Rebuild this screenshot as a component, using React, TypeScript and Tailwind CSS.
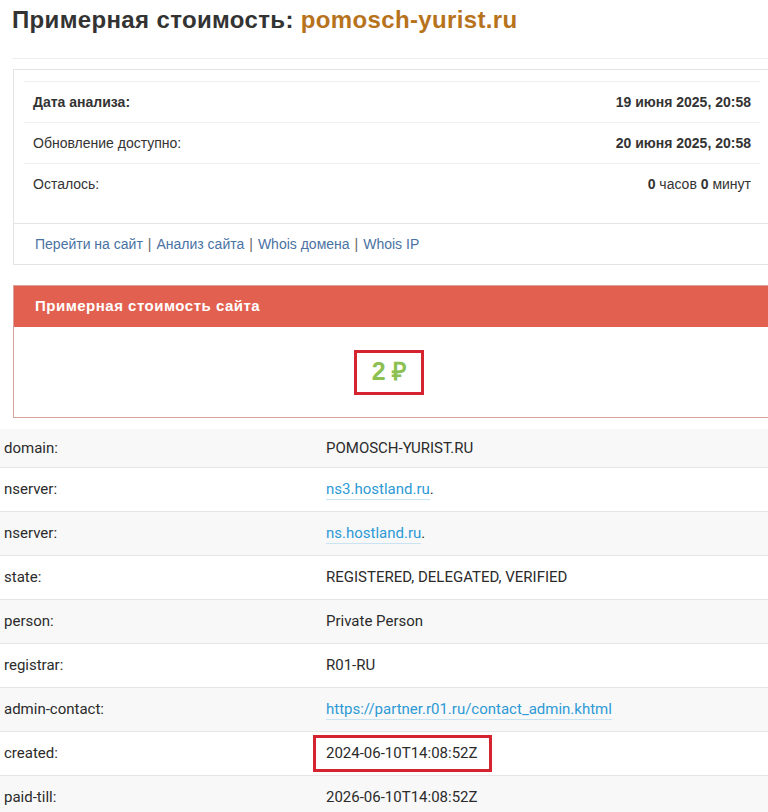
import React from "react";

const rows: { label: string; value: React.ReactNode; boxed?: boolean }[] = [
  { label: "domain:", value: "POMOSCH-YURIST.RU" },
  {
    label: "nserver:",
    value: (
      <>
        <a className="text-[#2d9ad6] border-b border-[#c9e3f3] pb-[1px]">ns3.hostland.ru</a>.
      </>
    ),
  },
  {
    label: "nserver:",
    value: (
      <>
        <a className="text-[#2d9ad6] border-b border-[#c9e3f3] pb-[1px]">ns.hostland.ru</a>.
      </>
    ),
  },
  { label: "state:", value: "REGISTERED, DELEGATED, VERIFIED" },
  { label: "person:", value: "Private Person" },
  { label: "registrar:", value: "R01-RU" },
  {
    label: "admin-contact:",
    value: (
      <a className="text-[#2d9ad6] border-b border-[#c9e3f3] pb-[1px]">
        https://partner.r01.ru/contact_admin.khtml
      </a>
    ),
  },
  { label: "created:", value: "2024-06-10T14:08:52Z", boxed: true },
  { label: "paid-till:", value: "2026-06-10T14:08:52Z" },
];

export default function App() {
  return (
    <div
      className="w-[768px] h-[812px] overflow-hidden bg-white text-[#333]"
      style={{ fontFamily: '"Liberation Sans", Arial, sans-serif' }}
    >
      <div className="w-[771px]">
        {/* Title */}
        <div className="pl-[12px] pt-[5px]">
          <h1 className="text-[24px] leading-[30px] font-bold tracking-[0.35px] text-[#333]">
            Примерная стоимость: <span className="text-[#b6731c]">pomosch-yurist.ru</span>
          </h1>
          <div className="mt-[23px] border-t border-[#eeeeee]" />
        </div>

        {/* Info card */}
        <div className="ml-[13px] mt-[10px] border border-[#e3e3e3] bg-white">
          <div className="px-[10px] pt-[11px]">
            <div className="border-t border-[#efefef] text-[14px]">
              <div className="h-[41px] flex items-center justify-between px-[9px] border-b border-[#efefef]">
                <span className="font-bold">Дата анализа:</span>
                <span className="font-bold">19 июня 2025, 20:58</span>
              </div>
              <div className="h-[41px] flex items-center justify-between px-[9px] border-b border-[#efefef]">
                <span>Обновление доступно:</span>
                <span className="font-bold">20 июня 2025, 20:58</span>
              </div>
              <div className="h-[41px] flex items-center justify-between px-[9px]">
                <span>Осталось:</span>
                <span>
                  <b>0</b> часов <b>0</b> минут
                </span>
              </div>
            </div>
          </div>
          <div className="mt-[18px] border-t border-[#e6e6e6] h-[41px] flex items-center px-[21px] text-[14px] text-[#666]">
            <a className="text-[#4a72a3]">Перейти на сайт</a>
            <span className="mx-[5px]">|</span>
            <a className="text-[#4a72a3]">Анализ сайта</a>
            <span className="mx-[5px]">|</span>
            <a className="text-[#4a72a3]">Whois домена</a>
            <span className="mx-[5px]">|</span>
            <a className="text-[#4a72a3]">Whois IP</a>
          </div>
        </div>

        {/* Price panel */}
        <div className="ml-[13px] mt-[20px] border border-[#d7a49c] bg-white">
          <div className="h-[41px] bg-[#e2604f] flex items-center px-[21px] text-white text-[15px] font-bold tracking-[0.5px]">
            Примерная стоимость сайта
          </div>
          <div className="h-[90px] flex items-center justify-center">
            <div className="w-[70px] h-[45px] border-[3px] border-[#d42430] flex items-center justify-center text-[#8cc152] text-[25px] font-bold tracking-[-0.5px] -ml-[6px]">
              2 ₽
            </div>
          </div>
        </div>
      </div>

      {/* Whois table */}
      <div
        className="mt-[11px] text-[15px] text-[#2b2b2b]"
        style={{ fontFamily: 'Roboto, "Liberation Sans", sans-serif' }}
      >
        {rows.map((r, i) => (
          <div
            key={i}
            className={`grid grid-cols-[322px_1fr] items-center ${i === 0 ? "h-[38px]" : "h-[44px] border-t border-[#e6e6e6]"} ${i % 2 === 0 ? "bg-[#f8f8f8]" : "bg-white"}`}
          >
            <div className="pl-[4px]">{r.label}</div>
            <div className="pl-[4px]">
              {r.boxed ? (
                <span className="inline-flex items-center h-[37px] border-[3px] border-[#d42430] -ml-[13px] pl-[10px] pr-[11px]">
                  {r.value}
                </span>
              ) : (
                r.value
              )}
            </div>
          </div>
        ))}
      </div>
    </div>
  );
}
